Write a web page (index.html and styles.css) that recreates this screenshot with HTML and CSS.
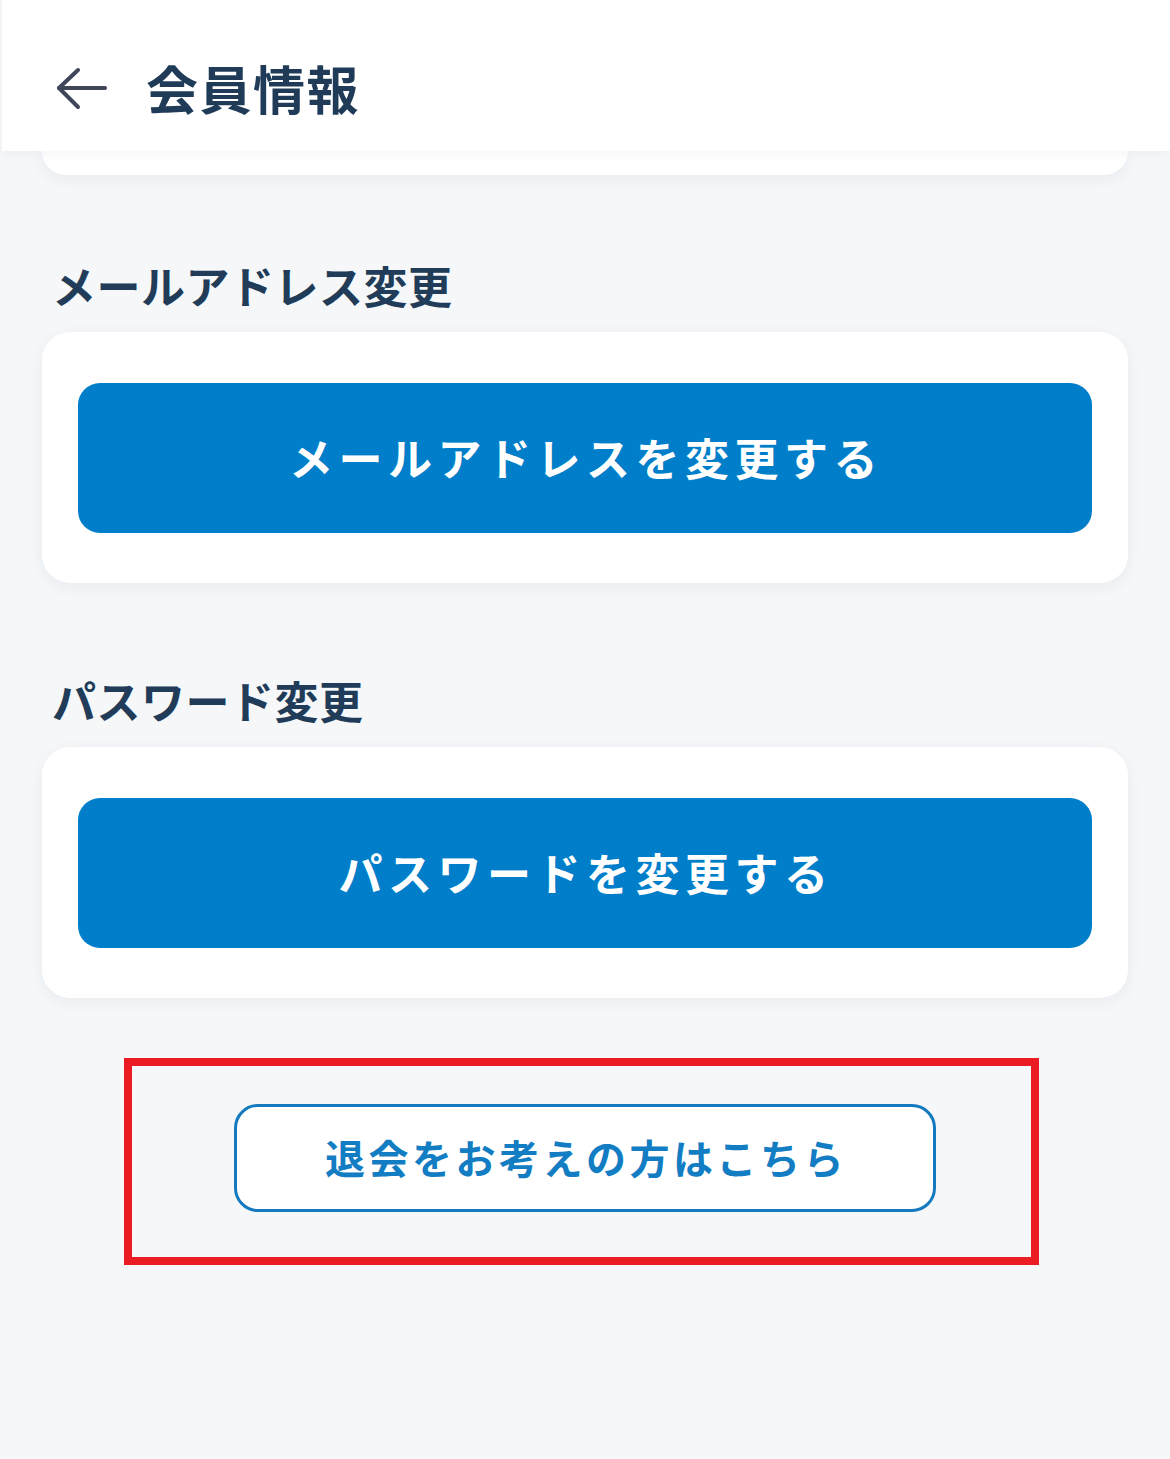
FILE: index.html
```html
<!DOCTYPE html>
<html lang="ja">
<head>
<meta charset="utf-8">
<title>会員情報</title>
<link rel="stylesheet" href="styles.css">
</head>
<body>
<header class="topbar">
  <button class="back" aria-label="戻る">
    <svg width="52" height="44" viewBox="0 0 52 44" fill="none" stroke="#3f4659" stroke-width="4" stroke-linecap="round" stroke-linejoin="round">
      <path d="M3 22 H49"/>
      <path d="M22 4 L3 22 L22 41"/>
    </svg>
  </button>
  <h1 class="title">会員情報</h1>
</header>
<main class="content">
  <div class="card card-stub"></div>

  <section class="section section-mail">
    <h2 class="section-title">メールアドレス変更</h2>
    <div class="card">
      <button class="primary-btn">メールアドレスを変更する</button>
    </div>
  </section>

  <section class="section section-pass">
    <h2 class="section-title">パスワード変更</h2>
    <div class="card">
      <button class="primary-btn">パスワードを変更する</button>
    </div>
  </section>

  <div class="highlight">
    <button class="outline-btn">退会をお考えの方はこちら</button>
  </div>
</main>
</body>
</html>
```

FILE: styles.css
```css
* { box-sizing: border-box; }

html, body {
  margin: 0;
  padding: 0;
}

body {
  background: #f5f7f9;
  font-family: "Noto Sans CJK JP", "Noto Sans", sans-serif;
  color: #1f3b57;
  min-height: 1459px;
}

.topbar {
  position: relative;
  z-index: 2;
  height: 151px;
  margin-left: 2px;
  background: #ffffff;
  display: flex;
  align-items: center;
  box-shadow: 0 3px 10px rgba(30, 50, 80, 0.04);
  padding-top: 24px;
}

.back {
  border: 0;
  background: none;
  padding: 0;
  margin-left: 54px;
  width: 52px;
  height: 44px;
  display: flex;
  align-items: center;
  justify-content: center;
  cursor: pointer;
}

.title {
  margin: 0 0 0 38px;
  font-size: 52px;
  font-weight: 700;
  letter-spacing: 1.5px;
  line-height: 1;
  color: #1f3b57;
}

.content {
  padding: 0 42px;
}

.card {
  background: #ffffff;
  border-radius: 28px;
  padding: 51px 36px 50px;
  box-shadow: 0 4px 16px rgba(30, 50, 80, 0.06);
}

.card-stub {
  height: 24px;
  padding: 0;
  border-radius: 0 0 28px 28px;
}

.section-title {
  margin: 0 0 15px 10px;
  font-size: 44px;
  line-height: 64px;
  font-weight: 700;
  letter-spacing: 0.5px;
  color: #213c58;
}

.section-mail { margin-top: 78px; }
.section-pass { margin-top: 85px; }

.primary-btn {
  display: flex;
  align-items: center;
  justify-content: center;
  width: 100%;
  height: 150px;
  border: 0;
  border-radius: 22px;
  background: #007ec9;
  color: #ffffff;
  font-family: inherit;
  font-size: 44px;
  font-weight: 700;
  letter-spacing: 5.5px;
  padding: 0 0 2px 2px;
  cursor: pointer;
}

.highlight {
  margin: 60px 0 0 82px;
  width: 915px;
  border: 8px solid #ec1c24;
  padding: 38px 95px 45px 102px;
}

.outline-btn {
  display: flex;
  align-items: center;
  justify-content: center;
  width: 702px;
  height: 108px;
  border: 3px solid #1479bf;
  border-radius: 24px;
  background: #ffffff;
  color: #127dc2;
  font-family: inherit;
  font-size: 40px;
  font-weight: 700;
  letter-spacing: 3.5px;
  padding: 0 0 2px 2px;
  cursor: pointer;
}
```
